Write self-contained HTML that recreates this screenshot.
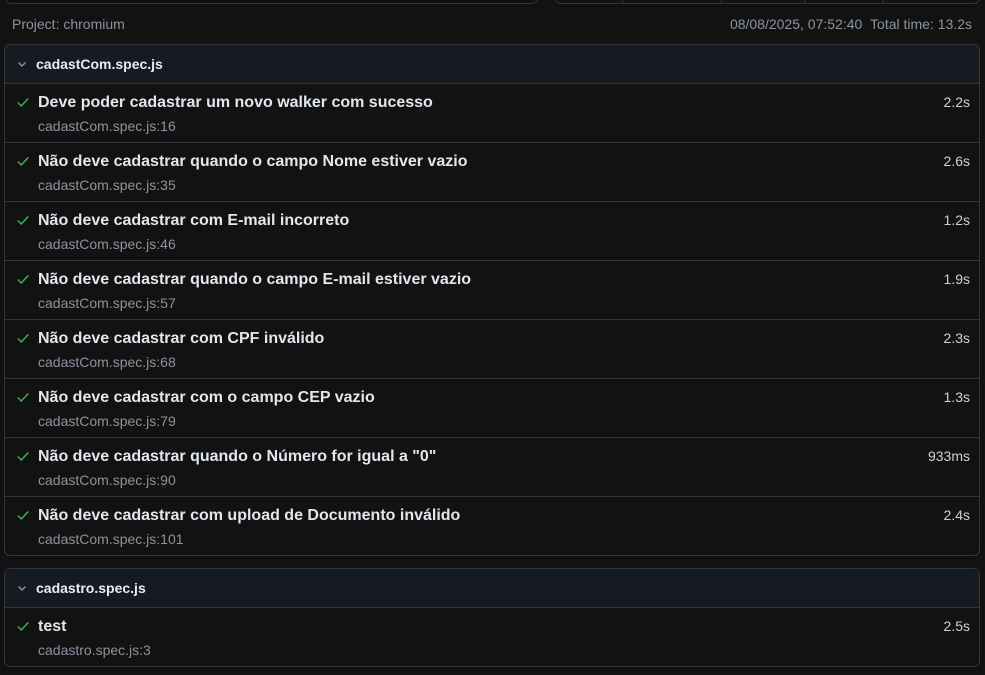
<!DOCTYPE html>
<html><head><meta charset="utf-8"><style>
*{box-sizing:border-box;margin:0;padding:0}
body{width:985px;height:675px;overflow:hidden;background:#121212;font-family:"Liberation Sans",Arial,sans-serif;color:#e6edf3;position:relative}
.top1{position:absolute;left:5px;top:-20px;width:533px;height:24px;border:1px solid #30363d;border-radius:6px;background:#0d1117}
.top2{position:absolute;left:555px;top:-20px;width:425px;height:24px;border:1px solid #30363d;border-radius:6px}
.top2 i{position:absolute;top:0;bottom:0;width:1px;background:#30363d}
.meta{position:absolute;top:16px;font-size:14px;color:#8b949e}
.group{position:absolute;left:4px;width:976px;border:1px solid #30363d;border-radius:6px;overflow:hidden}
.gh{height:39px;background:#161b22;border-bottom:1px solid #30363d;display:flex;align-items:center;font-weight:bold;font-size:14px;color:#e6edf3}
.gh .chev{width:31px;display:flex;justify-content:center;padding-left:2px}
.row{height:59px;position:relative;border-bottom:1px solid #30363d}
.row:last-child{border-bottom:none}
.row svg.ck{position:absolute;left:11px;top:11px}
.t{position:absolute;left:33px;top:10px;font-weight:bold;font-size:16px;color:#e1e7ee}
.s{position:absolute;left:33px;top:34px;font-size:14px;color:#8b949e}
.d{position:absolute;right:9px;top:10px;font-size:14px;color:#c9d1d9}
</style></head><body>
<div class="top1"></div>
<div class="top2"><i style="left:66px"></i><i style="left:165px"></i><i style="left:248px"></i><i style="left:327px"></i></div>
<div class="meta" style="left:12px">Project: chromium</div>
<div class="meta" style="right:13px"><span>08/08/2025, 07:52:40</span>&nbsp;&nbsp;Total time: 13.2s</div>

<div class="group" style="top:44px;height:512px">
<div class="gh"><span class="chev"><svg width="12" height="12" viewBox="0 0 12 12"><path d="M2.5 4.5 6 8l3.5-3.5" fill="none" stroke="#8b949e" stroke-width="1.4"/></svg></span>cadastCom.spec.js</div>
<div class="row"><svg class="ck" width="14" height="14" viewBox="0 0 16 16"><path d="M2 8.5 6 12.5 14 4" fill="none" stroke="#3fb950" stroke-width="1.6"/></svg><div class="t">Deve poder cadastrar um novo walker com sucesso</div><div class="s">cadastCom.spec.js:16</div><div class="d">2.2s</div></div>
<div class="row"><svg class="ck" width="14" height="14" viewBox="0 0 16 16"><path d="M2 8.5 6 12.5 14 4" fill="none" stroke="#3fb950" stroke-width="1.6"/></svg><div class="t">Não deve cadastrar quando o campo Nome estiver vazio</div><div class="s">cadastCom.spec.js:35</div><div class="d">2.6s</div></div>
<div class="row"><svg class="ck" width="14" height="14" viewBox="0 0 16 16"><path d="M2 8.5 6 12.5 14 4" fill="none" stroke="#3fb950" stroke-width="1.6"/></svg><div class="t">Não deve cadastrar com E-mail incorreto</div><div class="s">cadastCom.spec.js:46</div><div class="d">1.2s</div></div>
<div class="row"><svg class="ck" width="14" height="14" viewBox="0 0 16 16"><path d="M2 8.5 6 12.5 14 4" fill="none" stroke="#3fb950" stroke-width="1.6"/></svg><div class="t">Não deve cadastrar quando o campo E-mail estiver vazio</div><div class="s">cadastCom.spec.js:57</div><div class="d">1.9s</div></div>
<div class="row"><svg class="ck" width="14" height="14" viewBox="0 0 16 16"><path d="M2 8.5 6 12.5 14 4" fill="none" stroke="#3fb950" stroke-width="1.6"/></svg><div class="t">Não deve cadastrar com CPF inválido</div><div class="s">cadastCom.spec.js:68</div><div class="d">2.3s</div></div>
<div class="row"><svg class="ck" width="14" height="14" viewBox="0 0 16 16"><path d="M2 8.5 6 12.5 14 4" fill="none" stroke="#3fb950" stroke-width="1.6"/></svg><div class="t">Não deve cadastrar com o campo CEP vazio</div><div class="s">cadastCom.spec.js:79</div><div class="d">1.3s</div></div>
<div class="row"><svg class="ck" width="14" height="14" viewBox="0 0 16 16"><path d="M2 8.5 6 12.5 14 4" fill="none" stroke="#3fb950" stroke-width="1.6"/></svg><div class="t">Não deve cadastrar quando o Número for igual a "0"</div><div class="s">cadastCom.spec.js:90</div><div class="d">933ms</div></div>
<div class="row"><svg class="ck" width="14" height="14" viewBox="0 0 16 16"><path d="M2 8.5 6 12.5 14 4" fill="none" stroke="#3fb950" stroke-width="1.6"/></svg><div class="t">Não deve cadastrar com upload de Documento inválido</div><div class="s">cadastCom.spec.js:101</div><div class="d">2.4s</div></div>
</div>

<div class="group" style="top:568px;height:99px">
<div class="gh"><span class="chev"><svg width="12" height="12" viewBox="0 0 12 12"><path d="M2.5 4.5 6 8l3.5-3.5" fill="none" stroke="#8b949e" stroke-width="1.4"/></svg></span>cadastro.spec.js</div>
<div class="row"><svg class="ck" width="14" height="14" viewBox="0 0 16 16"><path d="M2 8.5 6 12.5 14 4" fill="none" stroke="#3fb950" stroke-width="1.6"/></svg><div class="t">test</div><div class="s">cadastro.spec.js:3</div><div class="d">2.5s</div></div>
</div>
</body></html>
